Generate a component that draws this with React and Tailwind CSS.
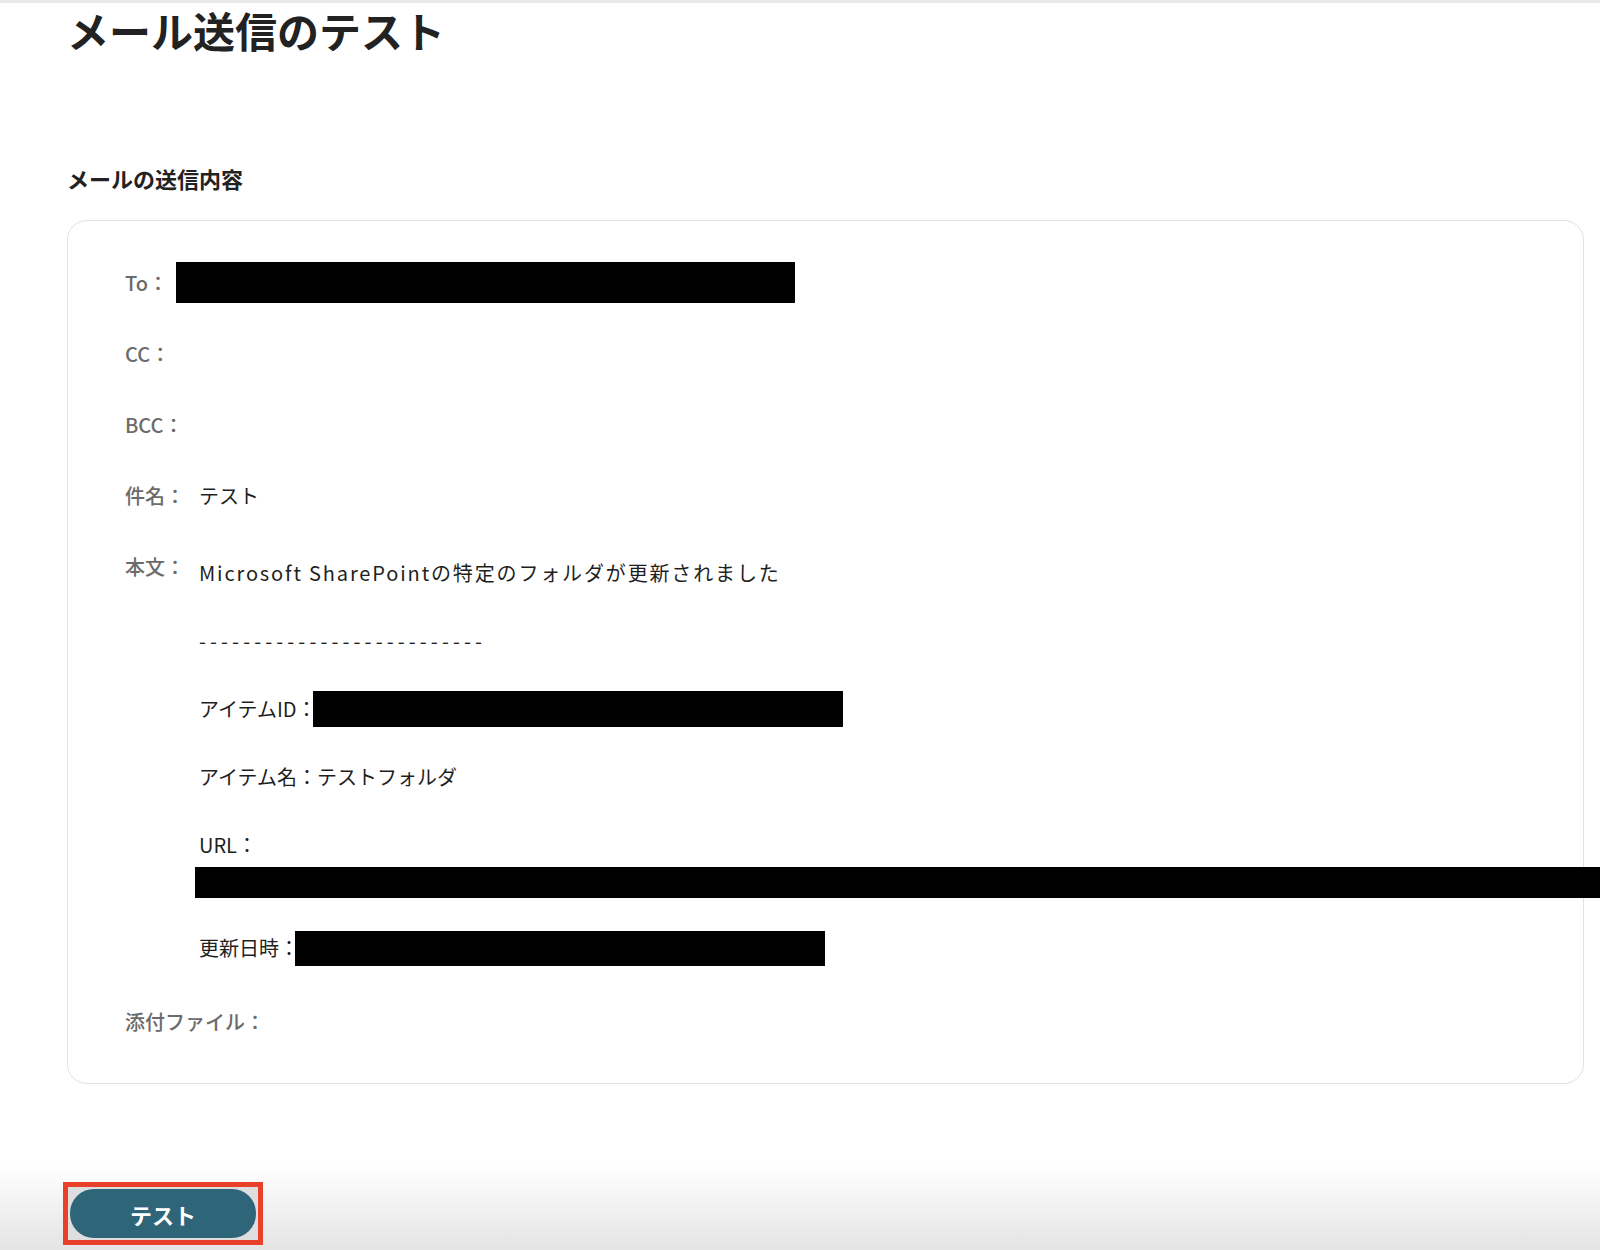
import React from 'react';

const jp = "font-['Noto_Sans_CJK_JP','Noto_Sans',sans-serif]";

function Redacted({ className }) {
  return <span className={`block bg-black ${className}`} />;
}

function Row({ label, children }) {
  return (
    <div className="flex items-center h-[41px] gap-[14px]">
      <span className="text-[20px] font-medium text-[#6b6b6b] leading-none whitespace-nowrap">{label}</span>
      {children}
    </div>
  );
}

function BodyLine({ children }) {
  return <div className="flex items-center h-[36px] text-[20px] text-[#1f1f1f] whitespace-nowrap">{children}</div>;
}

export default function App() {
  return (
    <div className={`w-[1600px] h-[1250px] overflow-hidden bg-white flex flex-col ${jp}`}>
      <div className="h-[3px] bg-[#e9e9e9]" />

      <div className="pl-[67px] pr-[16px]">
        <h1 className="mt-[6px] text-[42px] leading-[42px] font-bold text-[#222]">メール送信のテスト</h1>

        <h2 className="mt-[116px] text-[22px] leading-[22px] font-semibold text-[#222]">メールの送信内容</h2>

        {/* 送信内容カード */}
        <div className="mt-[31px] w-[1517px] border border-[#e2e2e2] rounded-[20px] pt-[41px] pb-[41px] pl-[57px] flex flex-col gap-[30px]">
          <Row label="To：">
            <Redacted className="w-[619px] h-[41px] -ml-[6px]" />
          </Row>
          <Row label="CC：" />
          <Row label="BCC：" />
          <Row label="件名：">
            <span className="text-[20px] text-[#1f1f1f] leading-none">テスト</span>
          </Row>

          <div className="flex items-start gap-[14px]">
            <span className="h-[41px] flex items-center text-[20px] font-medium text-[#6b6b6b] leading-none whitespace-nowrap">本文：</span>
            <div className="pt-[9px] pb-[5px] flex flex-col gap-[32px]">
              <BodyLine>
                <span className="tracking-[1.85px]">Microsoft SharePointの特定のフォルダが更新されました</span>
              </BodyLine>
              <BodyLine>
                <span className="tracking-[4.1px]">--------------------------</span>
              </BodyLine>
              <BodyLine>
                アイテムID：
                <Redacted className="w-[530px] h-[36px] -ml-[4px]" />
              </BodyLine>
              <BodyLine>アイテム名：テストフォルダ</BodyLine>
              <div className="flex flex-col">
                <BodyLine>URL：</BodyLine>
                <Redacted className="mt-[4px] w-[1420px] h-[31px] -ml-[4px]" />
              </div>
              <BodyLine>
                更新日時：
                <Redacted className="w-[530px] h-[35px] -ml-[4px]" />
              </BodyLine>
            </div>
          </div>

          <Row label="添付ファイル：" />
        </div>
      </div>

      {/* フッター */}
      <div className="mt-auto h-[130px] bg-gradient-to-b from-white from-35% to-[#e4e4e4] flex items-end pl-[63px] pb-[5px]">
        <div className="w-[200px] h-[63px] border-[5px] border-[#e8402a] bg-[#dedede] p-[2px]">
          <button className="w-full h-full rounded-[24px] bg-[#2e6579] text-white text-[22px] font-bold leading-none">
            テスト
          </button>
        </div>
      </div>
    </div>
  );
}
